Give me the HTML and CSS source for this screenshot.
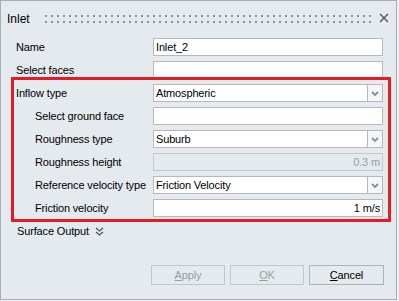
FILE: index.html
```html
<!DOCTYPE html>
<html lang="en">
<head>
    <meta charset="UTF-8">
    <meta name="viewport" content="width=device-width, initial-scale=1.0">
    <title>Inlet</title>
    <link rel="stylesheet" href="styles.css">
</head>
<body>
    <div class="dialog">
        <div class="titlebar">
            <span class="title">Inlet</span>
            <div class="grip"></div>
            <svg class="close" width="10" height="10" viewBox="0 0 10 10">
                <path d="M1 1 L9 9 M9 1 L1 9" stroke="#505458" stroke-width="1.4" fill="none"/>
            </svg>
        </div>

        <div class="form">
            <label class="label">Name</label>
            <div class="field">Inlet_2</div>

            <label class="label">Select faces</label>
            <div class="field"></div>

            <label class="label">Inflow type</label>
            <div class="field select">
                <span class="value">Atmospheric</span>
                <span class="arrow"><svg width="8" height="5" viewBox="0 0 8 5"><path d="M1 1 L4 4 L7 1" stroke="#8a8e92" stroke-width="1.8" fill="none"/></svg></span>
            </div>

            <label class="label sub">Select ground face</label>
            <div class="field"></div>

            <label class="label sub">Roughness type</label>
            <div class="field select">
                <span class="value">Suburb</span>
                <span class="arrow"><svg width="8" height="5" viewBox="0 0 8 5"><path d="M1 1 L4 4 L7 1" stroke="#8a8e92" stroke-width="1.8" fill="none"/></svg></span>
            </div>

            <label class="label sub">Roughness height</label>
            <div class="field number disabled">0.3 m</div>

            <label class="label sub">Reference velocity type</label>
            <div class="field select">
                <span class="value">Friction Velocity</span>
                <span class="arrow"><svg width="8" height="5" viewBox="0 0 8 5"><path d="M1 1 L4 4 L7 1" stroke="#8a8e92" stroke-width="1.8" fill="none"/></svg></span>
            </div>

            <label class="label sub">Friction velocity</label>
            <div class="field number">1 m/s</div>
        </div>

        <div class="section-toggle">
            <span>Surface Output</span>
            <svg width="9" height="9" viewBox="0 0 9 9">
                <path d="M1 1 L4.5 4 L8 1 M1 5 L4.5 8 L8 5" stroke="#505458" stroke-width="1.2" fill="none"/>
            </svg>
        </div>

        <div class="buttons">
            <button class="btn" disabled><u>A</u>pply</button>
            <button class="btn" disabled><u>O</u>K</button>
            <button class="btn wide"><u>C</u>ancel</button>
        </div>

        <!-- highlight around the inflow settings -->
        <div class="highlight"></div>
    </div>
</body>
</html>
```

FILE: styles.css
```css
* {
    margin: 0;
    padding: 0;
    box-sizing: border-box;
}

body {
    font-family: 'Liberation Sans', Arial, sans-serif;
    font-size: 11px;
    letter-spacing: -0.15px;
    color: #000;
    background-color: #eef1f3;
}

.dialog {
    position: relative;
    width: 397px;
    height: 300px;
    border: 1px solid #a9adb1;
    background-color: #e4eaee;
    display: flex;
    flex-direction: column;
}

.titlebar {
    height: 36px;
    display: flex;
    align-items: center;
    padding: 0 7px 0 6px;
}

.title {
    font-size: 12px;
    letter-spacing: 0;
}

.grip {
    flex: 1;
    height: 8px;
    margin: 0 8px 0 15px;
    background: conic-gradient(from 270deg at 2px 2px, #8e9296 25%, transparent 0) 0 0 / 6px 6px;
}

.close {
    margin-top: -2px;
}

.form {
    display: grid;
    grid-template-columns: 137px 230px;
    grid-auto-rows: 18px;
    row-gap: 5px;
    padding: 1px 0 0 15px;
}

.label {
    display: flex;
    align-items: center;
}

.label.sub {
    padding-left: 19px;
}

.field {
    background-color: #fff;
    border: 1px solid #b5b9bd;
    display: flex;
    align-items: center;
    padding: 0 2px;
    white-space: nowrap;
}

.field.select {
    padding-right: 0;
}

.field .value {
    flex: 1;
}

.field .arrow {
    width: 16px;
    height: 18px;
    margin: -1px -1px -1px 0;
    border: 1px solid #b5b9bd;
    background-color: #f4f6f8;
    display: flex;
    align-items: center;
    justify-content: center;
}

.field.number {
    justify-content: flex-end;
}

.field.disabled {
    background-color: #e4eaee;
    border-color: #c3c7cb;
    color: #9a9ea2;
}

.section-toggle {
    display: flex;
    align-items: center;
    gap: 6px;
    height: 18px;
    margin-top: 5px;
    padding-left: 16px;
}

.buttons {
    margin-top: auto;
    display: flex;
    justify-content: flex-end;
    gap: 5px;
    padding: 0 12px 14px 0;
}

.btn {
    width: 74px;
    height: 20px;
    font-family: inherit;
    font-size: 11px;
    letter-spacing: -0.15px;
    color: #000;
    background-color: #e4eaee;
    border: 1px solid #b0b4b8;
}

.btn.wide {
    width: 75px;
}

.btn:disabled {
    color: #9a9ea2;
    border-color: #c3c7cb;
}

.highlight {
    position: absolute;
    left: 10px;
    top: 76px;
    width: 380px;
    height: 145px;
    border: 3px solid #e41c24;
    pointer-events: none;
}
```
